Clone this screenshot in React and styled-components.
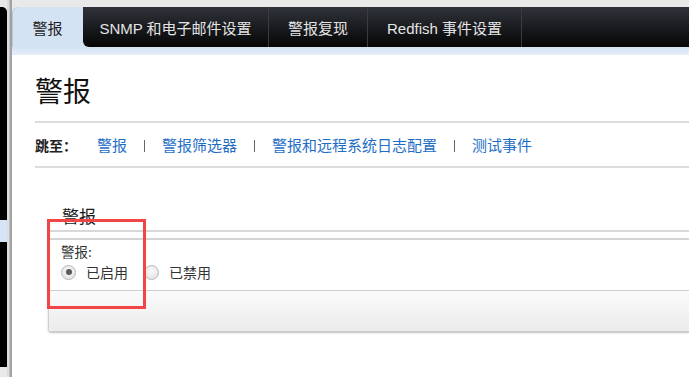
import React from 'react'
import styled, { createGlobalStyle } from 'styled-components'

const GlobalStyle = createGlobalStyle`
  html, body {
    margin: 0;
    padding: 0;
    background: #fff;
  }
  body {
    font-family: "Liberation Sans", "Noto Sans CJK SC", sans-serif;
    color: #222;
  }
`

const Page = styled.div`
  display: flex;
  height: 377px;
  overflow: hidden;
`

const Sidebar = styled.aside`
  width: 7px;
  background: #e9e9e9;
  display: flex;
  flex-direction: column;
  padding: 7px 0 10px;
  box-sizing: border-box;
`

const SideBlock = styled.div`
  flex: 1;
  background: #000;
  border-top-right-radius: 5px;
  padding-top: 213px;
  .current {
    height: 22px;
    background: #d5e5f5;
  }
`

const Divider = styled.div`
  width: 5px;
  background: linear-gradient(to right, #dcdcdc 0 2px, #c4c4c4 2px 3px, #a2a2a2 3px 5px);
`

const Main = styled.main`
  flex: 1;
  display: flex;
  flex-direction: column;
  min-width: 0;
`

const TopBar = styled.header`
  background: #e9e9e9;
  padding-top: 7px;
`

const TabRow = styled.nav`
  display: flex;
  height: 40px;
  background: #d3e3f4;
  border-top-left-radius: 6px;
  box-shadow: inset 1px 0 0 #b9c6d3;
`

const ActiveTab = styled.div`
  width: ${({ width }) => width}px;
  display: flex;
  align-items: center;
  justify-content: center;
  font-size: 15px;
  color: #1e1e1e;
`

const DarkGroup = styled.div`
  flex: 1;
  display: flex;
  background: linear-gradient(#30333a, #15171a 60%, #060606);
  border-bottom-left-radius: 6px;
`

const Tab = styled.div`
  width: ${({ width }) => width}px;
  display: flex;
  align-items: center;
  justify-content: center;
  font-size: 15px;
  color: #e4e4e4;
  border-right: 1px solid #3a3c40;
  box-sizing: border-box;
  white-space: nowrap;
`

const BlueStrip = styled.div`
  height: 8px;
  background: linear-gradient(#d3e3f4, #e6eff9);
`

const Content = styled.section`
  flex: 1;
  padding: 18px 0 0 23px;
`

const Title = styled.h1`
  margin: 0;
  font-size: 28px;
  font-weight: normal;
  line-height: 34px;
  color: #111;
  font-family: "Noto Sans CJK SC", sans-serif;
  padding-bottom: 14px;
  border-bottom: 2px solid #dcdcdc;
`

const JumpBar = styled.div`
  display: flex;
  align-items: center;
  height: 43px;
  font-size: 15px;
  border-bottom: 2px solid #dcdcdc;
  font-family: "Noto Sans CJK SC", sans-serif;
  b {
    font-size: 14px;
    color: #222;
    margin-right: 20px;
  }
  a {
    color: #1e6ec6;
    text-decoration: none;
  }
`

const Pipe = styled.i`
  width: 1px;
  height: 12px;
  background: #666;
  margin: 2px 17px 0 17px;
`

const Section = styled.div`
  position: relative;
  margin: 37px 0 0 13px;
`

const SectionTitle = styled.h2`
  margin: 0;
  font-size: 17px;
  font-weight: normal;
  line-height: 22px;
  padding: 0 0 3px 14px;
  color: #1a1a1a;
  font-family: "Noto Sans CJK SC", sans-serif;
  border-bottom: 2px solid #d8d8d8;
`

const Panel = styled.div`
  margin-top: 6px;
  border: 1px solid #cfcfcf;
  border-top: 2px solid #d4d4d4;
  border-right: none;
  border-bottom: 2px solid #cdcdcd;
  border-bottom-left-radius: 4px;
  box-shadow: -1px 1px 2px rgba(0, 0, 0, 0.08);
`

const PanelBody = styled.div`
  padding: 2px 0 6px 12px;
  background: #fff;
  font-family: "Noto Sans CJK SC", sans-serif;
  font-size: 14px;
  color: #333;
`

const FieldLabel = styled.div`
  line-height: 18px;
  font-size: 13.5px;
`

const RadioRow = styled.div`
  display: flex;
  align-items: center;
  height: 24px;
`

const RadioOption = styled.label`
  display: flex;
  align-items: center;
  margin-right: ${({ gap }) => gap}px;
`

const RadioDot = styled.span`
  width: 13px;
  height: 13px;
  border-radius: 50%;
  border: 1px solid #b6b6b6;
  background: radial-gradient(circle at 50% 40%, #fafafa, #dedede);
  display: flex;
  align-items: center;
  justify-content: center;
  margin-right: 10px;
  &::after {
    content: '';
    width: 6px;
    height: 6px;
    border-radius: 50%;
    background: ${({ checked }) => (checked ? '#5a5a5a' : 'transparent')};
  }
`

const PanelFooter = styled.div`
  height: 40px;
  border-top: 1px solid #cfcfcf;
  background: linear-gradient(#fbfbfb, #ebebeb);
  border-bottom-left-radius: 4px;
`

const Marker = styled.div`
  position: absolute;
  left: -1px;
  top: 14px;
  width: 99px;
  height: 90px;
  border: 3px solid #f24545;
  box-sizing: border-box;
  pointer-events: none;
`

const tabs = [
  { label: 'SNMP 和电子邮件设置', width: 186 },
  { label: '警报复现', width: 99 },
  { label: 'Redfish 事件设置', width: 154 },
]

const links = ['警报', '警报筛选器', '警报和远程系统日志配置', '测试事件']

export default function App() {
  return (
    <>
      <GlobalStyle />
      <Page>
        <Sidebar>
          <SideBlock>
            <div className="current" />
          </SideBlock>
        </Sidebar>
        <Divider />
        <Main>
          <TopBar>
            <TabRow>
              <ActiveTab width={71}>警报</ActiveTab>
              <DarkGroup>
                {tabs.map((t) => (
                  <Tab key={t.label} width={t.width}>{t.label}</Tab>
                ))}
              </DarkGroup>
            </TabRow>
          </TopBar>
          <BlueStrip />
          <Content>
            <Title>警报</Title>
            <JumpBar>
              <b>跳至：</b>
              {links.map((l, i) => (
                <React.Fragment key={l}>
                  {i > 0 && <Pipe />}
                  <a href="#">{l}</a>
                </React.Fragment>
              ))}
            </JumpBar>
            <Section>
              <SectionTitle>警报</SectionTitle>
              <Panel>
                <PanelBody>
                  <FieldLabel>警报:</FieldLabel>
                  <RadioRow>
                    <RadioOption gap={16}>
                      <RadioDot checked />
                      已启用
                    </RadioOption>
                    <RadioOption gap={0}>
                      <RadioDot />
                      已禁用
                    </RadioOption>
                  </RadioRow>
                </PanelBody>
                <PanelFooter />
              </Panel>
              <Marker />
            </Section>
          </Content>
        </Main>
      </Page>
    </>
  )
}
